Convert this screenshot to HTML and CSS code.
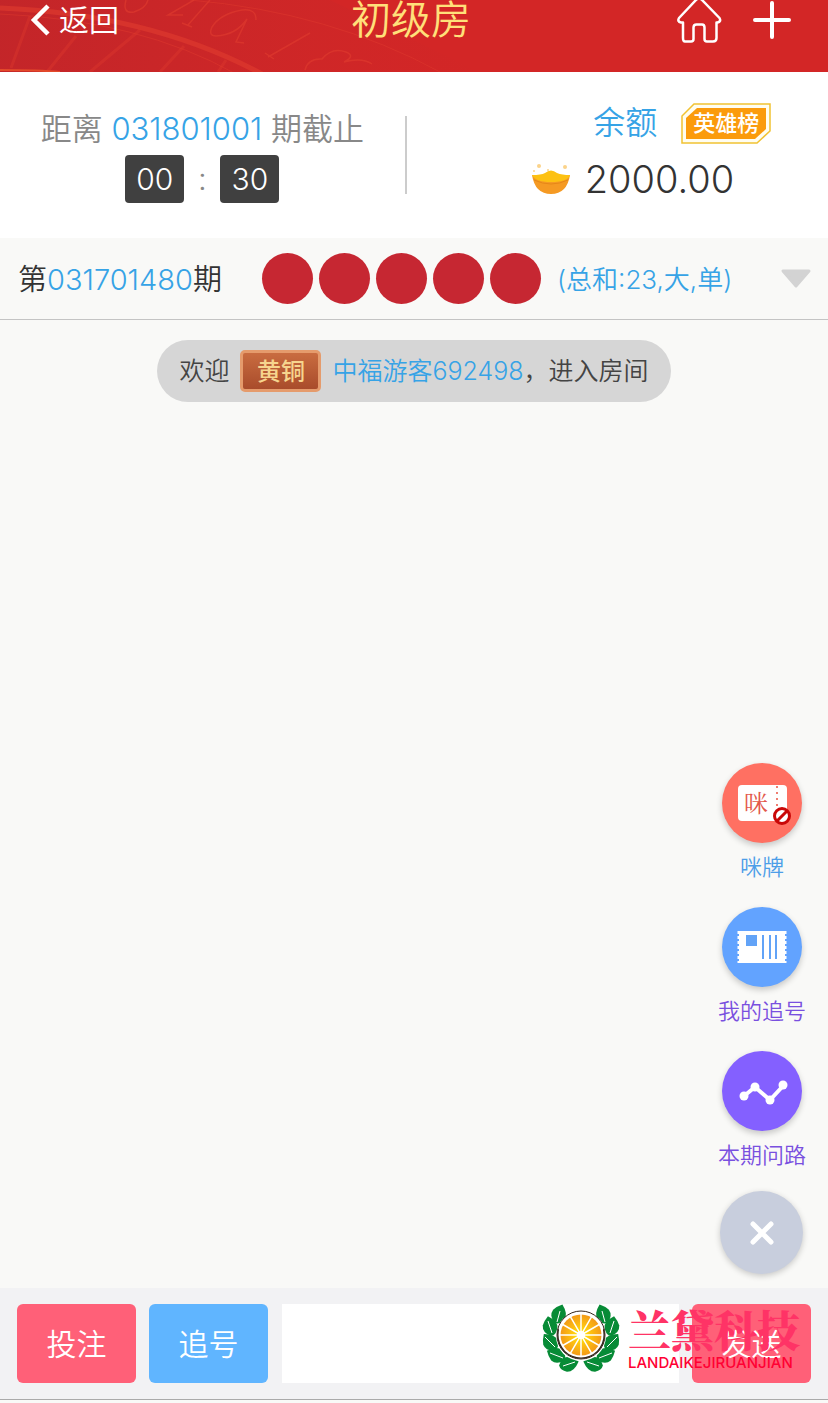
FILE: index.html
```html
<!DOCTYPE html>
<html lang="zh-CN">
<head>
<meta charset="utf-8">
<meta name="viewport" content="width=device-width, initial-scale=1">
<title>初级房</title>
<link rel="stylesheet" href="styles.css">
</head>
<body>
<header class="topbar">
  <svg class="topbar-art" viewBox="0 0 480 72" aria-hidden="true">
    <defs>
      <linearGradient id="wheel" x1="0" x2="1"><stop offset="0" stop-color="#b9252b"/><stop offset=".65" stop-color="#cc2728"/><stop offset="1" stop-color="#d32626"/></linearGradient>
    </defs>
    <path d="M0 0H330L480 72H0Z" fill="url(#wheel)" opacity=".6"/>
    <g fill="none" stroke="#df3a2e">
      <path d="M0 8Q150 14 262 74" stroke-width="5" opacity=".65"/>
      <path d="M0 14Q140 20 236 74M190 0Q330 12 440 72" stroke-width="1" opacity=".5"/>
      <path d="M30 16L11 68M76 36L47 72M140 30L90 72M184 46L160 72M226 60L218 72" stroke-width="3" opacity=".4"/>
      <path d="M126 0q-4 14 8 12q12-4 14-12M194 0l-26 15h15M210 0l-22 25m-6-2l10 4M256 20q0-12-14-10q-22 4-30 17q-4 9 4 9q20-1 31-17l-11 23l8 1M310 33l-42 24m-3-4l9 6M305 70q3-12 17-11q10-12 24-7q10 4-2 10q18-5 28 2" stroke-width="1.500" opacity=".65"/>
      <path d="M0 70q40 0 60 2" stroke="#e34a2b" stroke-width="2"/>
    </g>
  </svg>
  <a class="back" href="#"><svg width="20" height="32" viewBox="0 0 20 32" aria-hidden="true"><path d="M18 2L4 16L18 30" fill="none" stroke="#fff" stroke-width="4.500"/></svg>返回</a>
  <h1>初级房</h1>
  <nav class="actions">
    <a href="#" aria-label="首页"><svg width="46" height="46" viewBox="0 0 46 46"><path d="M20.500 2.500Q23 .5 25.500 2.500L43.500 21Q45.500 24.500 41.500 25.500H40.500V41Q40.500 44.500 37 44.500H31Q28.500 44.500 28.500 42V30.500Q28.500 27.500 26 27.500H20.500Q17.500 27.500 17.500 30.500V42Q17.500 44.500 15 44.500H9Q7 44.500 7 41V25.500H5Q1 24.500 3 21Z" fill="none" stroke="#fff" stroke-width="2.500" stroke-linejoin="round"/></svg></a>
    <button type="button" aria-label="更多"><svg width="40" height="40" viewBox="0 0 40 40"><path d="M20 3V37M3 20H37" stroke="#fff" stroke-width="4" stroke-linecap="round"/></svg></button>
  </nav>
</header>

<section class="summary">
  <div class="countdown">
    <p>距离 <span class="issue">031801001</span> 期截止</p>
    <div class="timer"><b>00</b><i>:</i><b>30</b></div>
  </div>
  <div class="balance">
    <div class="balance-head"><span>余额</span><a class="heroes" href="#"><svg viewBox="0 0 90 41" aria-hidden="true"><path d="M13 1H89V28L76 40H1V13Z" fill="#fffdf0" stroke="#f1c232" stroke-width="1.500"/><path d="M16 5H85V26L74 36H5V15Z" fill="#fb9b0c"/></svg><span>英雄榜</span></a></div>
    <div class="amount"><svg width="40" height="34" viewBox="0 0 40 34" aria-hidden="true"><path d="M1 13Q20 18 39 13Q36 32 20 32Q4 32 1 13Z" fill="#f59a23"/><path d="M1 13Q10 13 14 11Q20 6 26 11Q31 13 39 13Q37 20 20 20Q4 20 1 13Z" fill="#fdc112"/><path d="M3 18Q20 26 37 18" fill="none" stroke="#e68718"/><g fill="#fbd38a"><circle cx="8" cy="4" r="2"/><circle cx="34" cy="5" r="2"/><circle cx="3" cy="9" r="1"/><circle cx="17" cy="8" r="1"/></g></svg><strong>2000.00</strong></div>
  </div>
</section>

<section class="result">
  <div class="result-issue">第<span class="issue">031701480</span>期</div>
  <div class="balls"><i></i><i></i><i></i><i></i><i></i></div>
  <div class="total">(总和:23,大,单)</div>
  <button type="button" class="expand" aria-label="展开"><svg width="32" height="20" viewBox="0 0 32 20"><path d="M3 2H29L16 17Z" fill="#d3d3d3" stroke="#d3d3d3" stroke-width="3" stroke-linejoin="round"/></svg></button>
</section>

<main class="room">
  <p class="welcome"><span>欢迎</span><span class="rank">黄铜</span><span><span class="issue">中福游客692498</span>，进入房间</span></p>
  <div class="tools">
    <button type="button" class="tool">
      <span class="disc coral"><svg viewBox="0 0 80 80" aria-hidden="true"><rect x="16" y="22" width="49" height="36" rx="4" fill="#fff"/><path d="M55 23V46" stroke="#ef7d71" stroke-width="2" stroke-dasharray="2 4"/><text class="mi" x="22" y="49">咪</text><circle cx="60" cy="53" r="7.500" fill="#fff" stroke="#c90808" stroke-width="3"/><path d="M55 58L65 48" stroke="#c90808" stroke-width="3"/></svg></span>
      <span class="tool-name sky">咪牌</span>
    </button>
    <button type="button" class="tool">
      <span class="disc blue"><svg viewBox="0 0 80 80" aria-hidden="true"><path d="M17 24H63V56H17Z" fill="#fff"/><path d="M16.500 24V56M63.500 24V56" stroke="#fff" stroke-width="2" stroke-dasharray="3 2"/><path d="M24 28H35V39H24Z" fill="#62a3f7"/><path d="M41 28V52M48 28V52M54 28V52" stroke="#62a3f7" stroke-width="2"/></svg></span>
      <span class="tool-name violet">我的追号</span>
    </button>
    <button type="button" class="tool">
      <span class="disc purple"><svg viewBox="0 0 80 80" aria-hidden="true"><path d="M22 45L33 36L48 49L61 35" fill="none" stroke="#fff" stroke-width="4"/><g fill="#fff"><circle cx="22" cy="45" r="4.500"/><circle cx="33" cy="36" r="4.500"/><circle cx="48" cy="49" r="4.500"/><circle cx="61" cy="34" r="4.500"/></g></svg></span>
      <span class="tool-name violet">本期问路</span>
    </button>
    <button type="button" class="close" aria-label="关闭"><svg width="24" height="24" viewBox="0 0 24 24"><path d="M3 3L21 21M21 3L3 21" stroke="#fff" stroke-width="5" stroke-linecap="round"/></svg></button>
  </div>
</main>

<footer class="composer">
  <button type="button" class="key pink">投注</button>
  <button type="button" class="key azure">追号</button>
  <input type="text" class="message" aria-label="消息">
  <button type="button" class="key pink">发送</button>
  <div class="brand">
    <svg width="78" height="68" viewBox="0 0 78 68" aria-hidden="true">
      <defs>
        <radialGradient id="fruit"><stop offset="0" stop-color="#fff200"/><stop offset=".5" stop-color="#fdc010"/><stop offset="1" stop-color="#f39a18"/></radialGradient>
        <path id="leaf" d="M0 -10Q9 -3 7 4Q4 10 -1 10Q-9 5 -7 -2Q-5 -6 0 -10Z"/>
        <g id="branch" fill="#078b36">
          <use href="#leaf" transform="translate(17 10) rotate(20)"/>
          <use href="#leaf" transform="translate(8 22) rotate(-12)"/>
          <use href="#leaf" transform="translate(8 38) rotate(-38)"/>
          <use href="#leaf" transform="translate(14 51) rotate(-65)"/>
          <use href="#leaf" transform="translate(27 60) rotate(75)"/>
          <path d="M18 7L15 18M6 17L10 29M3 33L13 43M8 49L21 54M21 62L33 58" stroke="#fff" stroke-width="1"/>
        </g>
      </defs>
      <use href="#branch"/><use href="#branch" transform="translate(78 0) scale(-1 1)"/>
      <circle cx="39" cy="32" r="25" fill="#fff"/>
      <path d="M16 24A24 24 0 1 0 62 24A25 23 0 0 1 16 24Z" fill="#35251b"/>
      <circle cx="39" cy="31" r="24" fill="none" stroke="#35251b" stroke-width="1"/>
      <circle cx="39" cy="31" r="22.500" fill="#fff"/>
      <circle cx="39" cy="31" r="20.500" fill="url(#fruit)"/>
      <path d="M39 10V52M28.500 12.800L49.500 49.200M20.800 20.500L57.200 41.500M18 31H60M20.800 41.500L57.200 20.500M28.500 49.200L49.500 12.800" stroke="#fff" stroke-width="1.500"/>
      <circle cx="39" cy="31" r="4" fill="#fff"/>
    </svg>
    <div class="brand-text"><strong>兰黛科技</strong><span>LANDAIKEJIRUANJIAN</span></div>
  </div>
</footer>
</body>
</html>
```

FILE: styles.css
```css
* { box-sizing: border-box; }
body {
  margin: 0;
  min-height: 100vh;
  padding-bottom: 3px;
  display: flex;
  flex-direction: column;
  background: #f9f9f7;
  color: #333;
  font-family: Inter, "Noto Sans CJK SC", sans-serif;
  font-weight: 350;
}
h1, p { margin: 0; font-weight: inherit; }
a { color: inherit; text-decoration: none; }
button { margin: 0; padding: 0; border: 0; background: none; font: inherit; color: inherit; }
svg { display: block; }
i { font-style: normal; }
.issue { color: #36a3e6; }

.topbar {
  position: relative;
  height: 72px;
  padding: 0 36px 32px 30px;
  display: grid;
  grid-template-columns: 1fr auto 1fr;
  align-items: center;
  background: #d32626;
}
.topbar-art { position: absolute; left: 0; top: 0; width: 480px; height: 72px; }
.back { position: relative; display: flex; align-items: center; gap: 9px; color: #fff; font-size: 30px; line-height: 40px; }
.topbar h1 { position: relative; color: #ffe07a; font-size: 40px; line-height: 40px; }
.actions { height: 40px; justify-self: end; display: flex; align-items: center; gap: 30px; }

.summary { height: 166px; display: flex; align-items: center; background: #fff; }
.countdown {
  flex: 49;
  height: 78px;
  display: flex;
  flex-direction: column;
  align-items: center;
  justify-content: center;
  border-right: 2px solid #ccc;
  color: #888;
  font-size: 31px;
  white-space: nowrap;
}
.countdown p { line-height: 44px; padding-bottom: 4px; }
.timer { display: flex; align-items: center; line-height: 48px; }
.timer b { width: 59px; border-radius: 4px; background: #404040; color: #fff; font-size: 30px; font-weight: inherit; text-align: center; }
.timer i { width: 36px; text-align: center; }
.balance { flex: 51; display: flex; flex-direction: column; align-items: center; }
.balance-head { padding-left: 130px; display: flex; align-items: center; gap: 24px; color: #36a3e6; font-size: 32px; line-height: 48px; }
.heroes { display: grid; place-items: center; width: 90px; color: #fff; font-size: 22px; font-weight: 500; line-height: 40px; }
.heroes > * { grid-area: 1 / 1; }
.amount { padding-left: 30px; display: flex; align-items: center; gap: 14px; line-height: 64px; }
.amount strong { font-size: 38px; font-weight: inherit; }

.result { height: 82px; padding: 0 16px 0 18px; display: flex; align-items: center; border-bottom: 1px solid #c4c4c4; white-space: nowrap; }
.result-issue { width: 244px; padding-bottom: 3px; font-size: 29px; }
.balls { display: flex; gap: 6px; }
.balls i { width: 51px; height: 51px; border-radius: 50%; background: #c62732; }
.total { margin-left: 16px; padding-bottom: 3px; color: #36a3e6; font-size: 26px; }
.expand { margin-left: auto; }

.room { flex: 1; padding: 20px 22px 14px; display: flex; flex-direction: column; }
.welcome {
  align-self: center;
  height: 62px;
  padding: 0 22px;
  display: flex;
  align-items: center;
  gap: 11px;
  border-radius: 31px;
  background: #d6d6d6;
  color: #444;
  font-size: 25px;
  line-height: 38px;
  white-space: nowrap;
}
.rank {
  width: 81px;
  height: 42px;
  border: 3px solid #e59b6c;
  border-radius: 5px;
  background: linear-gradient(#c96c40, #a94c2b);
  color: #f6d58e;
  font-size: 24px;
  font-weight: 500;
  text-align: center;
}
.tools { margin-top: auto; align-self: flex-end; display: flex; flex-direction: column; align-items: center; }
.tool { display: flex; flex-direction: column; align-items: center; margin-bottom: 16px; }
.tool:nth-child(3) { margin-bottom: 12px; }
.disc { width: 80px; height: 80px; border-radius: 50%; box-shadow: 0 3px 6px #0003; }
.coral { background: #ff7062; }
.blue { background: #62a3ff; }
.purple { background: #8460ff; }
.mi { fill: #e3584b; font: 400 24px "Noto Serif CJK SC", "Noto Sans CJK SC", serif; }
.tool-name { font-size: 22px; line-height: 48px; }
.sky { color: #4d9ee8; }
.violet { color: #7950df; }
.close { width: 83px; height: 83px; display: grid; place-items: center; border-radius: 50%; background: #c8cedd; box-shadow: 0 2px 6px #0003; }

.composer { position: relative; height: 112px; padding: 16px 17px 0; display: flex; background: #f2f2f4; border-bottom: 1px solid #aaa; }
.key { width: 119px; height: 79px; padding-bottom: 4px; flex: none; border-radius: 6px; color: #fff; font-size: 30px; }
.key + .key { margin-left: 13px; }
.pink { background: #ff6078; }
.azure { background: #60b5ff; }
.message { flex: 1; min-width: 0; height: 79px; margin: 0 13px 0 14px; padding: 0 16px; border: 0; border-radius: 0; background: #fff; font: inherit; font-size: 30px; }
.brand { position: absolute; right: 28px; top: 16px; display: flex; gap: 8px; pointer-events: none; }
.brand-text { display: flex; flex-direction: column; }
.brand strong { color: #ff3366; font: 900 43px/50px "Noto Serif CJK SC", "Noto Sans CJK SC", serif; }
.brand-text span { color: #ff0033; font: 500 15px/18px Inter, sans-serif; }
```
